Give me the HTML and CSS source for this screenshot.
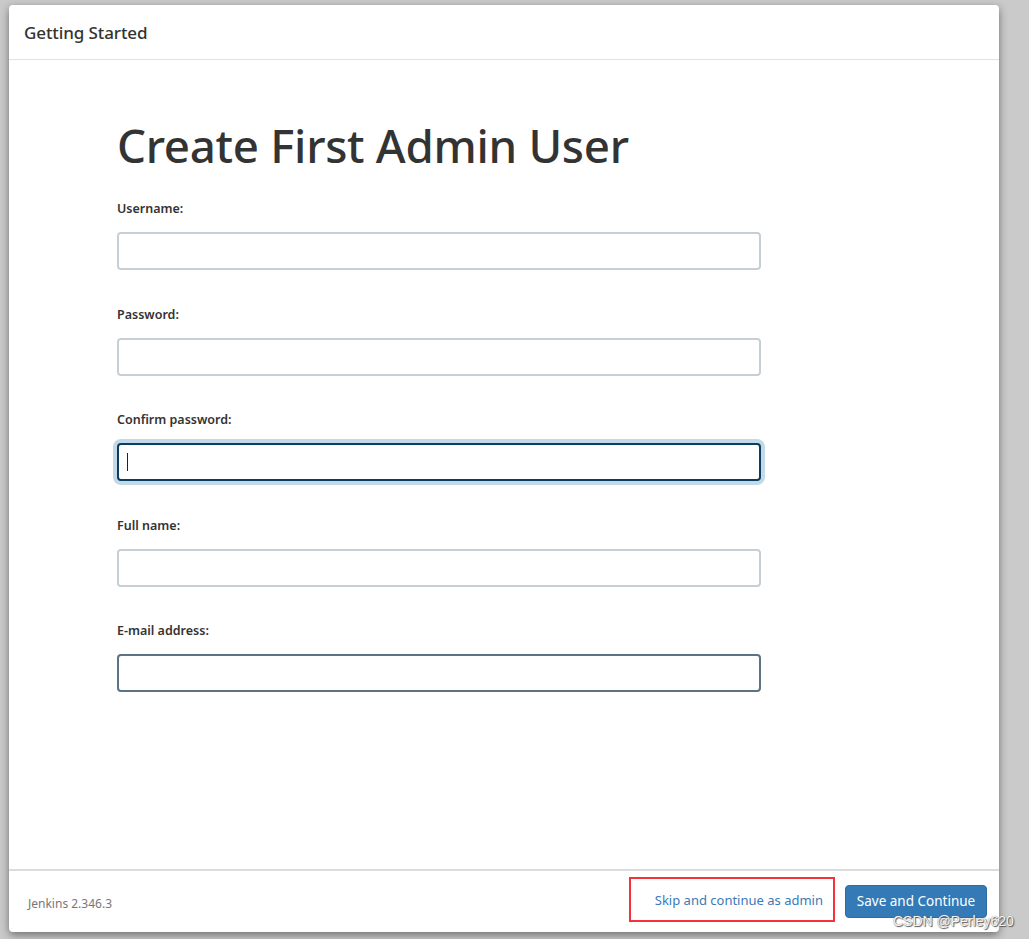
FILE: index.html
```html
<!DOCTYPE html>
<html lang="en">
<head>
<meta charset="utf-8">
<title>Getting Started</title>
<link rel="stylesheet" href="styles.css">
</head>
<body>
<div class="modal">
  <div class="modal-header">
    <h4 class="modal-title">Getting Started</h4>
  </div>
  <div class="modal-body">
    <h1 class="page-title">Create First Admin User</h1>
    <form class="form">
      <div class="field">
        <label class="field-label">Username:</label>
        <input class="field-input" type="text">
      </div>
      <div class="field">
        <label class="field-label">Password:</label>
        <input class="field-input" type="password">
      </div>
      <div class="field">
        <label class="field-label">Confirm password:</label>
        <div class="field-input focused"><span class="caret"></span></div>
      </div>
      <div class="field">
        <label class="field-label">Full name:</label>
        <input class="field-input" type="text">
      </div>
      <div class="field">
        <label class="field-label">E-mail address:</label>
        <input class="field-input hovered" type="text">
      </div>
    </form>
  </div>
  <div class="modal-footer">
    <span class="version">Jenkins 2.346.3</span>
    <div class="actions">
      <span class="skip-box"><a class="skip-link" href="#">Skip and continue as admin</a></span>
      <button class="btn-primary" type="button">Save and Continue</button>
    </div>
  </div>
</div>
<div class="watermark">CSDN @Perley620</div>
</body>
</html>
```
FILE: styles.css
```css
html, body {
  margin: 0;
  padding: 0;
}
body {
  width: 1029px;
  height: 939px;
  background: #cacaca;
  font-family: "Noto Sans", "Open Sans", "Liberation Sans", sans-serif;
  color: #333;
  position: relative;
  overflow: hidden;
}
.modal {
  position: absolute;
  left: 9px;
  top: 5px;
  width: 990px;
  height: 927px;
  background: #fff;
  border-radius: 4px;
  box-shadow: 0 3px 9px rgba(0,0,0,0.45);
  display: flex;
  flex-direction: column;
}
.modal-header {
  height: 54px;
  border-bottom: 1px solid #e2e2e2;
  display: flex;
  align-items: center;
  padding: 0 15px;
}
.modal-title {
  margin: 0;
  font-size: 17px;
  font-weight: 500;
  color: #333;
  letter-spacing: -0.1px;
}
.modal-body {
  flex: 1;
  padding: 0 0 0 108px;
}
.page-title {
  margin: 60px 0 30px;
  font-size: 45.7px;
  font-weight: 500;
  line-height: 1.1;
  color: #333;
  letter-spacing: -0.3px;
}
.form {
  display: flex;
  flex-direction: column;
  gap: 35.5px;
}
.field {
  display: flex;
  flex-direction: column;
  gap: 15px;
}
.field-label {
  font-size: 12.5px;
  font-weight: 600;
  color: #333;
  line-height: 17px;
}
.field-input {
  box-sizing: border-box;
  width: 644px;
  height: 38px;
  border: 2px solid #c6d0d4;
  border-radius: 4px;
  background: #fff;
  padding: 0 8px;
  font: inherit;
  margin: 0;
  outline: none;
}
.field-input.focused {
  border-color: #0b3d5f;
  box-shadow: 0 0 0 4px #c2d9e7;
  display: flex;
  align-items: center;
}
.caret {
  width: 1px;
  height: 18px;
  background: #222;
}
.field-input.hovered {
  border-color: #5b7383;
}
.modal-footer {
  height: 63px;
  border-top: 2px solid #dcdcdc;
  box-sizing: border-box;
  display: flex;
  align-items: center;
  justify-content: space-between;
  padding: 0 12px 0 19px;
}
.version {
  font-size: 12px;
  color: #777;
  padding-top: 4px;
}
.actions {
  display: flex;
  align-items: center;
  gap: 10px;
}
.skip-box {
  display: flex;
  align-items: center;
  box-sizing: border-box;
  height: 45px;
  width: 206px;
  border: 2px solid #f5313a;
  justify-content: flex-end;
  padding-right: 10px;
  margin-top: -4px;
}
.skip-link {
  color: #3a7ab7;
  text-decoration: none;
  font-size: 13px;
}
.btn-primary {
  height: 33px;
  width: 142px;
  border: 1px solid #2e6da4;
  border-radius: 4px;
  background: #337ab7;
  color: #fff;
  font: inherit;
  font-size: 13.5px;
  padding: 0;
  margin-top: -1px;
}
.watermark {
  position: absolute;
  left: 893px;
  top: 913px;
  font-family: "Liberation Sans", Arial, sans-serif;
  font-size: 14px;
  color: #f4f4f4;
  text-shadow: 1px 1px 1px #555, 0 0 1px #777;
}
```
